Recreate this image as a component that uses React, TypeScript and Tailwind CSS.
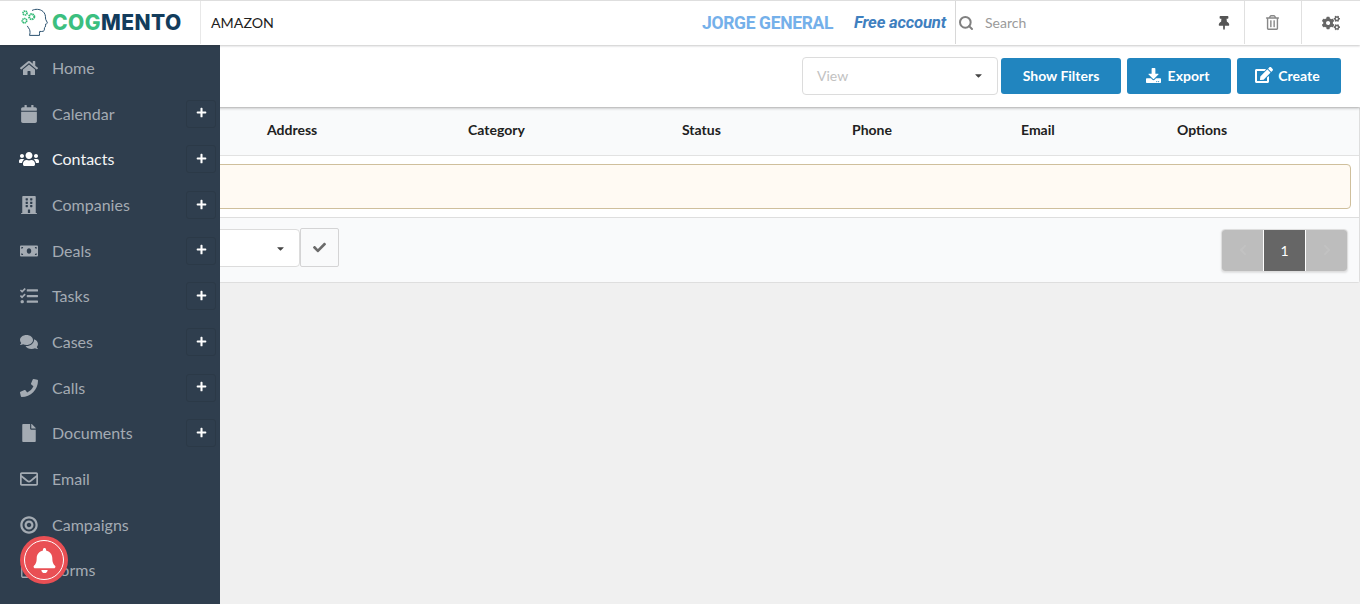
import {
  FaHome,
  FaCalendar,
  FaUsers,
  FaBuilding,
  FaMoneyBill,
  FaTasks,
  FaComments,
  FaPhone,
  FaFile,
  FaRegEnvelope,
  FaBullseye,
  FaWpforms,
  FaPlus,
  FaThumbtack,
  FaRegTrashAlt,
  FaCogs,
  FaDownload,
  FaEdit,
  FaCheck,
  FaBell,
  FaCaretDown,
  FaChevronLeft,
  FaChevronRight,
} from "react-icons/fa";
import { Search } from "lucide-react";

const navItems = [
  { label: "Home", icon: FaHome },
  { label: "Calendar", icon: FaCalendar, add: true },
  { label: "Contacts", icon: FaUsers, add: true, active: true },
  { label: "Companies", icon: FaBuilding, add: true },
  { label: "Deals", icon: FaMoneyBill, add: true },
  { label: "Tasks", icon: FaTasks, add: true },
  { label: "Cases", icon: FaComments, add: true },
  { label: "Calls", icon: FaPhone, add: true },
  { label: "Documents", icon: FaFile, add: true },
  { label: "Email", icon: FaRegEnvelope },
  { label: "Campaigns", icon: FaBullseye },
  { label: "Forms", icon: FaWpforms },
];

const columns = [
  { label: "Address", width: "w-[201px]" },
  { label: "Category", width: "w-[214px]" },
  { label: "Status", width: "w-[170px]" },
  { label: "Phone", width: "w-[169px]" },
  { label: "Email", width: "w-[156px]" },
  { label: "Options", width: "w-[100px]" },
];

function Logo() {
  return (
    <div className="flex w-[201px] shrink-0 items-center border-r border-[#e8e8e8] pl-[21px]">
      <svg width="28" height="30" viewBox="0 0 28 30" fill="none" className="shrink-0">
        <path
          d="M11 2.500C14 .8 19 .8 22 3.500c2 1.800 2.600 4.200 2.500 6.500 0 1.200.4 2 1 3 .5.9 1 1.700.8 2.200-.2.6-1.200.7-1.800 1 .1 1.200.2 2.200-.3 2.800-.3.4-.8.5-.8 1 .1 1.300 0 2.700-1 3.200-1 .5-2.600.2-3.700.2-.3 1.300-.2 2.700-.2 4H8.500c.6-1.800.8-4 0-6-.5-1.200-1.600-2-2.200-3.500"
          stroke="#2b5270"
          strokeWidth="1"
        />
        <circle cx="4" cy="5" r="2" stroke="#2fb873" strokeWidth="1.700" strokeDasharray="1.300 .5" />
        <circle cx="10.700" cy="8.700" r="2.600" stroke="#2fb873" strokeWidth="2" strokeDasharray="1.500 .6" />
        <circle cx="3.500" cy="12.700" r="2.200" stroke="#2fb873" strokeWidth="1.700" strokeDasharray="1.300 .5" />
      </svg>
      <span className="ml-[3px] font-['Inter',sans-serif] text-[21px] leading-none font-extrabold tracking-[0.45px]">
        <span className="text-[#3cbf7f]">COG</span>
        <span className="text-[#123c5c]">MENTO</span>
      </span>
    </div>
  );
}

function Header() {
  return (
    <header className="relative z-20 flex h-[45px] shrink-0 border-t border-[#dedede] bg-white pb-px shadow-[0_1px_2px_rgba(34,36,38,0.25)]">
      <Logo />
      <div className="flex flex-1 items-center pl-[10px] text-[14.200px] text-[#212121]">AMAZON</div>
      <div className="flex items-center pt-[1px] font-['Roboto',sans-serif] text-[#74b0ea]">
        <span className="text-[17.500px] font-bold tracking-[-0.35px]">JORGE GENERAL</span>
        <span className="ml-[21px] mr-[9px] text-[16.700px] font-bold text-[#3f80bf] italic tracking-[-0.2px]">
          Free account
        </span>
      </div>
      <div className="flex w-[289px] items-center border-l border-[#d8d8d8] pl-[2px]">
        <Search size={16} strokeWidth={3} className="text-[#808080]" />
        <span className="ml-[11px] flex-1 text-[14px] text-[#9a9a9a]">Search</span>
        <FaThumbtack className="mr-[13px] text-[14px] text-[#555]" />
      </div>
      <div className="flex w-[57px] items-center justify-center border-l border-[#e0e0e0] pr-[1px]">
        <FaRegTrashAlt className="text-[15px] text-[#888]" />
      </div>
      <div className="flex w-[59px] items-center justify-center border-l border-[#e0e0e0] pr-[1px]">
        <FaCogs className="text-[18px] text-[#666]" />
      </div>
    </header>
  );
}

function Sidebar() {
  return (
    <aside className="absolute top-[45px] bottom-0 left-0 z-10 w-[220px] overflow-hidden bg-[#2f3e4e] pt-[0.300px]">
      {navItems.map((item) => (
        <div key={item.label} className="relative flex h-[45.670px] items-center text-[16px]">
          <div className="flex w-[56px] justify-center pl-[1px]">
            <item.icon className={item.active ? "text-[20px] text-white" : "text-[18px] text-[#a4abb3]"} />
          </div>
          <span className={item.active ? "ml-[-4px] text-[#f4f5f6]" : "ml-[-4px] text-[#a4abb3]"}>{item.label}</span>
          {item.add && (
            <div className="absolute top-1/2 right-[4px] flex h-[28px] w-[30px] -translate-y-1/2 items-center justify-center rounded-[3px] border border-[#2b3947]">
              <FaPlus className="mt-[-2px] text-[11px] text-white" />
            </div>
          )}
        </div>
      ))}
    </aside>
  );
}

function Toolbar() {
  return (
    <div className="relative z-[1] flex h-[62px] shrink-0 items-center justify-end gap-[6px] bg-white pr-[19px] shadow-[0_1px_3px_rgba(0,0,0,0.3)]">
      <div className="mr-[-3px] flex h-[38px] w-[196px] items-center rounded-[4px] border border-[#dcdcdc] pr-[13px] pl-[14px] pb-[2px] text-[14px] text-[#c2c2c2]">
        <span className="flex-1">View</span>
        <FaCaretDown className="text-[11px] text-[#444]" />
      </div>
      <button className="h-[36px] w-[120px] rounded-[3px] bg-[#2185bf] pb-[2px] text-[14px] font-bold text-white">Show Filters</button>
      <button className="flex h-[36px] w-[104px] items-center justify-center gap-[7px] rounded-[3px] bg-[#2185bf] pr-[3px] pb-[2px] text-[14px] font-bold text-white">
        <FaDownload className="text-[15px]" />
        Export
      </button>
      <button className="flex h-[36px] w-[104px] items-center justify-center gap-[5px] rounded-[3px] bg-[#2185bf] pr-[3px] pb-[2px] text-[14px] font-bold text-white">
        <FaEdit className="text-[18px]" />
        Create
      </button>
    </div>
  );
}

function ContactsTable() {
  return (
    <section className="rounded-b-[3px] border border-[#dedede] border-t-0 border-l-0 text-[14px]">
      <div className="flex h-[48px] items-center border-b border-[#e2e2e2] bg-[#f9fafb] pb-[5px] pl-[267px] font-bold text-[#212121]">
        {columns.map((col) => (
          <div key={col.label} className={col.width}>
            {col.label}
          </div>
        ))}
      </div>
      <div className="h-[62px] border-b border-[#dedede] bg-white pt-[8px] pr-[8px]">
        <div className="h-[45px] rounded-[4px] border border-[#cfbf9c] bg-[#fffaf3]" />
      </div>
      <div className="flex h-[64px] items-center bg-[#f9fafb] pr-[11px]">
        <div className="flex flex-1 items-center pb-[6px]">
          <div className="mt-[2px] flex h-[38px] w-[300px] items-center justify-end rounded-[4px] border border-[#dcdcdc] bg-white pr-[13px]">
            <FaCaretDown className="text-[11px] text-[#444]" />
          </div>
          <div className="flex h-[39px] w-[39px] items-center justify-center rounded-[2px] border border-[#d4d4d5] bg-[#f9fafb]">
            <FaCheck className="text-[13px] text-[#6b6b6b]" />
          </div>
        </div>
        <div className="flex h-[43px] w-[127px] gap-px rounded-[4px] border border-[#dedede] bg-white shadow-[0_1px_2px_rgba(0,0,0,0.1)]">
          <div className="flex flex-1 items-center justify-center rounded-l-[3px] bg-[#bdbdbd]">
            <FaChevronLeft className="text-[12px] text-[#c2c2c2]" />
          </div>
          <div className="flex flex-1 items-center justify-center bg-[#666] text-white">1</div>
          <div className="flex flex-1 items-center justify-center rounded-r-[3px] bg-[#bdbdbd]">
            <FaChevronRight className="text-[12px] text-[#c2c2c2]" />
          </div>
        </div>
      </div>
    </section>
  );
}

export default function App() {
  return (
    <div className="relative flex h-[604px] w-[1360px] flex-col overflow-hidden bg-[#f0f0f0] font-['Lato',sans-serif]">
      <Header />
      <main className="flex flex-1 flex-col">
        <Toolbar />
        <div className="pt-[1px]">
          <ContactsTable />
        </div>
      </main>
      <Sidebar />
      <button className="absolute top-[536px] left-[20px] z-30 flex h-[48px] w-[48px] items-center justify-center rounded-full bg-[#e94f54]">
        <span className="flex h-[40px] w-[40px] items-center justify-center rounded-full border border-white">
          <FaBell className="text-[25px] text-white" />
        </span>
      </button>
    </div>
  );
}
